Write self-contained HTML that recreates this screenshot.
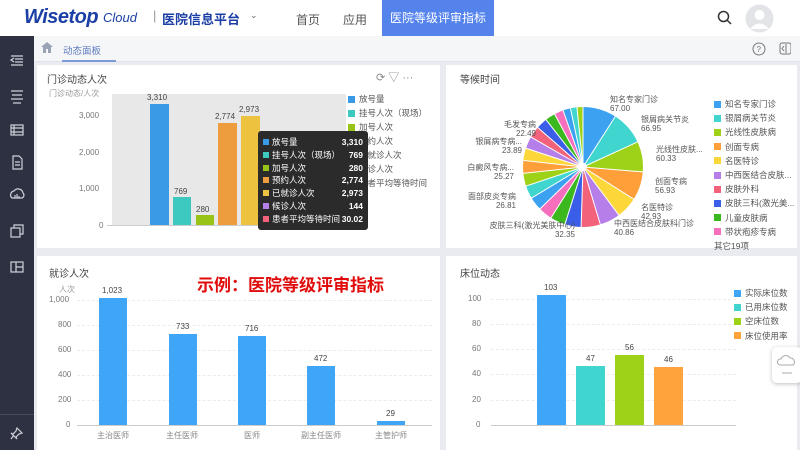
<!DOCTYPE html><html><head><meta charset="utf-8"><style>
*{margin:0;padding:0;box-sizing:border-box}
body{width:800px;height:450px;overflow:hidden;background:#e9ebf0;font-family:"Liberation Sans","Noto Sans CJK SC",sans-serif;position:relative;color:#333}
.a{position:absolute}
.hdr{left:0;top:0;width:800px;height:36px;background:#fff}
.side{left:0;top:36px;width:34px;height:414px;background:#2e3141}
.tabbar{left:34px;top:36px;width:766px;height:26px;background:#f5f6f8;border-bottom:1px solid #e1e3e8}
.p{background:#fff}
.t{font-size:10px;color:#444}
.s{font-size:8px;color:#777}
.bar{position:absolute}
.lg{font-size:8.5px;color:#555;position:absolute;white-space:nowrap}
.lg i{display:inline-block;width:7px;height:7px;margin-right:4px;vertical-align:-0.5px}
.grid{position:absolute;border-top:1px dashed #ececec}
</style></head><body>
<div class="a hdr">
 <div class="a" style="left:24px;top:6px;font-size:20px;font-weight:bold;font-style:italic;color:#1b3fa6;letter-spacing:-0.5px">Wisetop</div>
 <div class="a" style="left:103px;top:10px;font-size:13px;font-style:italic;color:#1b3fa6">Cloud</div>
 <div class="a" style="left:153px;top:8px;font-size:13px;color:#999">|</div>
 <div class="a" style="left:162px;top:9px;font-size:13px;font-weight:bold;color:#1b3fa6">医院信息平台</div>
 <div class="a" style="left:250px;top:10px;font-size:9px;color:#666">&#8964;</div>
 <div class="a" style="left:296px;top:11px;font-size:12px;color:#555">首页</div>
 <div class="a" style="left:343px;top:11px;font-size:12px;color:#555">应用</div>
 <div class="a" style="left:382px;top:0;width:112px;height:36px;background:#5483ec;color:#fff;font-size:12px;text-align:center;line-height:36px">医院等级评审指标</div>
 <svg class="a" style="left:717px;top:10px" width="16" height="16"><circle cx="6.5" cy="6.5" r="5" fill="none" stroke="#333" stroke-width="1.5"/><line x1="10" y1="10" x2="14" y2="14" stroke="#333" stroke-width="1.5"/></svg>
 <svg class="a" style="left:745px;top:4px" width="29" height="29"><circle cx="14.5" cy="14.5" r="14" fill="#e2e4e8"/><circle cx="14.5" cy="11" r="5" fill="#fff"/><path d="M5 25 Q14.5 14 24 25" fill="#fff"/></svg>
</div>
<div class="a side">
 <svg class="a" style="left:9px;top:14px" width="16" height="260" fill="none" stroke="#cfd2da" stroke-width="1.2">
  <path d="M2 6h12M6 9h8M6 12h8M2 15h12M5 8l-3 2 3 2"/>
  <path d="M2 41h12M3 45h10M2 49h12M4 53h8"/>
  <rect x="2" y="75" width="12" height="10"/><path d="M2 78h12M2 82h12M5 75v10"/>
  <path d="M4 106h6l3 3v10h-9z M6 112h5M6 115h5"/>
  <path d="M3 148a4 4 0 0 1 2-7a5 5 0 0 1 9 2a3 3 0 0 1-1 5z M6 148v-3M8 148v-4M10 148v-2"/>
  <rect x="2" y="178" width="9" height="9"/><path d="M5 178v-3h9v9h-3"/>
  <rect x="2" y="212" width="12" height="10"/><path d="M7 212v10M7 217h7"/>
 </svg>
 <div class="a" style="left:0;top:378px;width:34px;border-top:1px solid #444857"></div>
 <svg class="a" style="left:10px;top:390px" width="14" height="14" fill="none" stroke="#cfd2da" stroke-width="1.2"><path d="M7 2l5 5-3 1-3 3 1 2-6-6 2 1 3-3z M4 9l-3 4"/></svg>
</div>
<div class="a tabbar">
 <svg class="a" style="left:7px;top:6px" width="12" height="11"><path d="M6 0L0 5h2v6h3V7h2v4h3V5h2z" fill="#9aa3b5"/></svg>
 <div class="a" style="left:29px;top:7px;font-size:9.5px;color:#5f7cc0">动态面板</div>
 <div class="a" style="left:28px;top:24px;width:54px;height:2px;background:#7d9ad6"></div>
 <svg class="a" style="left:717px;top:5px" width="40" height="16" fill="none" stroke="#777" stroke-width="1"><circle cx="8" cy="8" r="6"/><text x="5.5" y="11" font-size="8" fill="#777" stroke="none">?</text><rect x="29" y="2" width="11" height="11" rx="2"/><path d="M33 5l-2 2.5 2 2.5M35 3v9"/></svg>
</div>

<div class="a p" style="left:37px;top:65px;width:403px;height:183px">
 <div class="a t" style="left:10px;top:6px">门诊动态人次</div>
 <div class="a" style="left:339px;top:4px;font-size:11px;color:#888">⟳ ▽ ···</div>
 <div class="a s" style="left:12px;top:23px;color:#999">门诊动态/人次</div>
 <div class="a" style="left:75px;top:29px;width:234px;height:131px;background:#e8e8e8"></div>
 <div class="a s" style="left:42px;top:46px">3,000</div>
 <div class="a s" style="left:42px;top:83px">2,000</div>
 <div class="a s" style="left:42px;top:119px">1,000</div>
 <div class="a s" style="left:62px;top:156px">0</div>
 <div class="a" style="left:70px;top:160px;width:240px;border-top:1px solid #ccc"></div>
 <div class="bar" style="left:113px;top:39px;width:19px;height:121px;background:#3b9ae6"></div>
 <div class="bar" style="left:136px;top:132px;width:18px;height:28px;background:#3dc9c0"></div>
 <div class="bar" style="left:159px;top:150px;width:18px;height:10px;background:#98c417"></div>
 <div class="bar" style="left:181px;top:58px;width:19px;height:102px;background:#ed9c3e"></div>
 <div class="bar" style="left:204px;top:51px;width:19px;height:109px;background:#ecc23e"></div>
 <div class="a s" style="left:110px;top:28px;color:#444">3,310</div>
 <div class="a s" style="left:137px;top:122px;color:#444">769</div>
 <div class="a s" style="left:159px;top:140px;color:#444">280</div>
 <div class="a s" style="left:178px;top:47px;color:#444">2,774</div>
 <div class="a s" style="left:202px;top:40px;color:#444">2,973</div>
 <div class="lg" style="left:311px;top:27px;line-height:14px"><i style="background:#3b9ae6"></i>放号量<br><i style="background:#3dc9c0"></i>挂号人次（现场）<br><i style="background:#98c417"></i>加号人次<br><i style="background:#ed9c3e"></i>预约人次<br><i style="background:#ecc23e"></i>已就诊人次<br><i style="background:#b57ee8"></i>候诊人次<br><i style="background:#f2637b"></i>患者平均等待时间</div>
 <div class="a" style="left:221px;top:66px;width:110px;height:99px;background:#2b2b2b;border-radius:3px;color:#fff;font-size:8.5px;padding:5px 5px;line-height:12.8px">
  <div style="display:flex;justify-content:space-between"><span><i style="display:inline-block;width:6px;height:6px;background:#3b9ae6;margin-right:3px"></i>放号量</span><b>3,310</b></div>
  <div style="display:flex;justify-content:space-between"><span><i style="display:inline-block;width:6px;height:6px;background:#3dc9c0;margin-right:3px"></i>挂号人次（现场）</span><b>769</b></div>
  <div style="display:flex;justify-content:space-between"><span><i style="display:inline-block;width:6px;height:6px;background:#98c417;margin-right:3px"></i>加号人次</span><b>280</b></div>
  <div style="display:flex;justify-content:space-between"><span><i style="display:inline-block;width:6px;height:6px;background:#ed9c3e;margin-right:3px"></i>预约人次</span><b>2,774</b></div>
  <div style="display:flex;justify-content:space-between"><span><i style="display:inline-block;width:6px;height:6px;background:#ecc23e;margin-right:3px"></i>已就诊人次</span><b>2,973</b></div>
  <div style="display:flex;justify-content:space-between"><span><i style="display:inline-block;width:6px;height:6px;background:#b57ee8;margin-right:3px"></i>候诊人次</span><b>144</b></div>
  <div style="display:flex;justify-content:space-between"><span><i style="display:inline-block;width:6px;height:6px;background:#f2637b;margin-right:3px"></i>患者平均等待时间</span><b>30.02</b></div>
 </div>
</div>

<div class="a p" style="left:446px;top:65px;width:351px;height:183px">
 <div class="a t" style="left:14px;top:6px">等候时间</div>
 <div class="a" style="left:77px;top:42px;width:120px;height:120px;border-radius:50%;background:conic-gradient(#3ba1f0 0 32.6deg,#40d6cf 0 65.3deg,#9ed218 0 94.7deg,#ff9f3a 0 122.4deg,#fcd73a 0 143.3deg,#b57ee8 0 163.2deg,#f2637b 0 181.8deg,#3b5ee8 0 197.5deg,#3cb81f 0 212.2deg,#f56fbd 0 225.8deg,#3ba1f0 0 238.9deg,#40d6cf 0 251.5deg,#9ed218 0 263.9deg,#ff9f3a 0 276.3deg,#fcd73a 0 288.2deg,#b57ee8 0 299.9deg,#f2637b 0 311.1deg,#3b5ee8 0 322deg,#3cb81f 0 331.8deg,#f56fbd 0 340.6deg,#3ba1f0 0 347.9deg,#40d6cf 0 354.2deg,#9ed218 0 360deg)"></div>
 <svg class="a" style="left:77px;top:42px" width="120" height="120"><g stroke="#fff" stroke-width="1" transform="translate(60 60)">
  <line x1="0" y1="0" x2="0" y2="-62"/><line x1="0" y1="0" x2="0" y2="-62" transform="rotate(32.6)"/><line x1="0" y1="0" x2="0" y2="-62" transform="rotate(65.3)"/><line x1="0" y1="0" x2="0" y2="-62" transform="rotate(94.7)"/><line x1="0" y1="0" x2="0" y2="-62" transform="rotate(122.4)"/><line x1="0" y1="0" x2="0" y2="-62" transform="rotate(143.3)"/><line x1="0" y1="0" x2="0" y2="-62" transform="rotate(163.2)"/><line x1="0" y1="0" x2="0" y2="-62" transform="rotate(181.8)"/><line x1="0" y1="0" x2="0" y2="-62" transform="rotate(197.5)"/><line x1="0" y1="0" x2="0" y2="-62" transform="rotate(212.2)"/><line x1="0" y1="0" x2="0" y2="-62" transform="rotate(225.8)"/><line x1="0" y1="0" x2="0" y2="-62" transform="rotate(238.9)"/><line x1="0" y1="0" x2="0" y2="-62" transform="rotate(251.5)"/><line x1="0" y1="0" x2="0" y2="-62" transform="rotate(263.9)"/><line x1="0" y1="0" x2="0" y2="-62" transform="rotate(276.3)"/><line x1="0" y1="0" x2="0" y2="-62" transform="rotate(288.2)"/><line x1="0" y1="0" x2="0" y2="-62" transform="rotate(299.9)"/><line x1="0" y1="0" x2="0" y2="-62" transform="rotate(311.1)"/><line x1="0" y1="0" x2="0" y2="-62" transform="rotate(322)"/><line x1="0" y1="0" x2="0" y2="-62" transform="rotate(331.8)"/><line x1="0" y1="0" x2="0" y2="-62" transform="rotate(340.6)"/><line x1="0" y1="0" x2="0" y2="-62" transform="rotate(347.9)"/><line x1="0" y1="0" x2="0" y2="-62" transform="rotate(354.2)"/>
 </g><circle cx="60" cy="60" r="4" fill="#fff"/></svg>
 <div class="a s" style="left:164px;top:30px;line-height:9px;color:#555">知名专家门诊<br>67.00</div>
 <div class="a s" style="left:195px;top:50px;line-height:9px;color:#555">银屑病关节炎<br>66.95</div>
 <div class="a s" style="left:210px;top:80px;line-height:9px;color:#555">光线性皮肤...<br>60.33</div>
 <div class="a s" style="left:209px;top:112px;line-height:9px;color:#555">创面专病<br>56.93</div>
 <div class="a s" style="left:195px;top:138px;line-height:9px;color:#555">名医特诊<br>42.93</div>
 <div class="a s" style="left:168px;top:154px;line-height:9px;color:#555">中西医结合皮肤科门诊<br>40.86</div>
 <div class="a s" style="left:32px;top:156px;line-height:9px;color:#555;text-align:right;width:97px">皮肤三科(激光美肤中心)<br>32.35</div>
 <div class="a s" style="left:10px;top:127px;line-height:9px;color:#555;text-align:right;width:60px">面部皮炎专病<br>26.81</div>
 <div class="a s" style="left:2px;top:98px;line-height:9px;color:#555;text-align:right;width:66px">白癜风专病...<br>25.27</div>
 <div class="a s" style="left:8px;top:72px;line-height:9px;color:#555;text-align:right;width:68px">银屑病专病...<br>23.89</div>
 <div class="a s" style="left:30px;top:55px;line-height:9px;color:#555;text-align:right;width:60px">毛发专病<br>22.49</div>
 <div class="lg" style="left:268px;top:32px;line-height:14.2px"><i style="background:#3ba1f0"></i>知名专家门诊<br><i style="background:#40d6cf"></i>银屑病关节炎<br><i style="background:#9ed218"></i>光线性皮肤病<br><i style="background:#ff9f3a"></i>创面专病<br><i style="background:#fcd73a"></i>名医特诊<br><i style="background:#b57ee8"></i>中西医结合皮肤...<br><i style="background:#f2637b"></i>皮肤外科<br><i style="background:#3b5ee8"></i>皮肤三科(激光美...<br><i style="background:#3cb81f"></i>儿童皮肤病<br><i style="background:#f56fbd"></i>带状疱疹专病<br>其它19项</div>
</div>

<div class="a p" style="left:37px;top:256px;width:403px;height:194px">
 <div class="a t" style="left:12px;top:9px">就诊人次</div>
 <div class="a" style="left:160px;top:15px;font-size:17px;font-weight:bold;color:#e00b0b">示例：医院等级评审指标</div>
 <div class="a s" style="left:22px;top:28px;color:#999">人次</div>
 <div class="grid" style="left:40px;top:44px;width:355px"></div>
 <div class="grid" style="left:40px;top:69px;width:355px"></div>
 <div class="grid" style="left:40px;top:94px;width:355px"></div>
 <div class="grid" style="left:40px;top:119px;width:355px"></div>
 <div class="grid" style="left:40px;top:144px;width:355px"></div>
 <div class="a" style="left:40px;top:169px;width:355px;border-top:1px solid #ccc"></div>
 <div class="a s" style="left:12px;top:39px">1,000</div><div class="a s" style="left:21px;top:64px">800</div><div class="a s" style="left:21px;top:89px">600</div><div class="a s" style="left:21px;top:114px">400</div><div class="a s" style="left:21px;top:139px">200</div><div class="a s" style="left:29px;top:164px">0</div>
 <div class="bar" style="left:62px;top:42px;width:28px;height:127px;background:#3ea5f7"></div>
 <div class="bar" style="left:132px;top:78px;width:28px;height:91px;background:#3ea5f7"></div>
 <div class="bar" style="left:201px;top:80px;width:28px;height:89px;background:#3ea5f7"></div>
 <div class="bar" style="left:270px;top:110px;width:28px;height:59px;background:#3ea5f7"></div>
 <div class="bar" style="left:340px;top:165px;width:28px;height:4px;background:#3ea5f7"></div>
 <div class="a s" style="left:65px;top:30px;color:#444">1,023</div>
 <div class="a s" style="left:139px;top:66px;color:#444">733</div>
 <div class="a s" style="left:208px;top:68px;color:#444">716</div>
 <div class="a s" style="left:277px;top:98px;color:#444">472</div>
 <div class="a s" style="left:349px;top:153px;color:#444">29</div>
 <div class="a s" style="left:60px;top:174px;color:#888">主治医师</div>
 <div class="a s" style="left:129px;top:174px;color:#888">主任医师</div>
 <div class="a s" style="left:207px;top:174px;color:#888">医师</div>
 <div class="a s" style="left:264px;top:174px;color:#888">副主任医师</div>
 <div class="a s" style="left:338px;top:174px;color:#888">主管护师</div>
</div>

<div class="a p" style="left:446px;top:256px;width:351px;height:194px">
 <div class="a t" style="left:14px;top:9px">床位动态</div>
 <div class="grid" style="left:45px;top:43px;width:245px"></div>
 <div class="grid" style="left:45px;top:68px;width:245px"></div>
 <div class="grid" style="left:45px;top:93px;width:245px"></div>
 <div class="grid" style="left:45px;top:118px;width:245px"></div>
 <div class="grid" style="left:45px;top:144px;width:245px"></div>
 <div class="a" style="left:45px;top:169px;width:245px;border-top:1px solid #ccc"></div>
 <div class="a s" style="left:22px;top:38px">100</div><div class="a s" style="left:26px;top:63px">80</div><div class="a s" style="left:26px;top:88px">60</div><div class="a s" style="left:26px;top:113px">40</div><div class="a s" style="left:26px;top:139px">20</div><div class="a s" style="left:30px;top:164px">0</div>
 <div class="bar" style="left:91px;top:39px;width:29px;height:130px;background:#3ea5f7"></div>
 <div class="bar" style="left:130px;top:110px;width:29px;height:59px;background:#40d6cf"></div>
 <div class="bar" style="left:169px;top:99px;width:29px;height:70px;background:#9ed218"></div>
 <div class="bar" style="left:208px;top:111px;width:29px;height:58px;background:#ffa43c"></div>
 <div class="a s" style="left:98px;top:27px;color:#444">103</div>
 <div class="a s" style="left:140px;top:98px;color:#444">47</div>
 <div class="a s" style="left:179px;top:87px;color:#444">56</div>
 <div class="a s" style="left:218px;top:99px;color:#444">46</div>
 <div class="lg" style="left:288px;top:30px;line-height:14.2px"><i style="background:#3ea5f7"></i>实际床位数<br><i style="background:#40d6cf"></i>已用床位数<br><i style="background:#9ed218"></i>空床位数<br><i style="background:#ffa43c"></i>床位使用率</div>
</div>
<div class="a" style="left:772px;top:347px;width:30px;height:36px;background:#fff;border-radius:5px;box-shadow:0 1px 4px rgba(0,0,0,.25)">
 <svg width="30" height="36" fill="none" stroke="#aaa" stroke-width="1"><path d="M8 18a3 3 0 0 1 1-6a5 5 0 0 1 9-1a4 4 0 0 1 3 7z M10 26h10"/></svg>
</div>
</body></html>
